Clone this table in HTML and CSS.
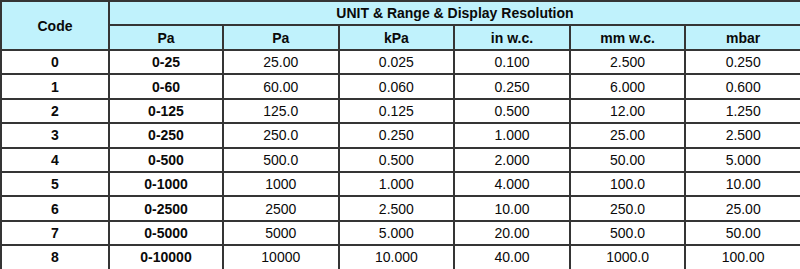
FILE: index.html
```html
<!DOCTYPE html>
<html lang="en">

<head>
    <meta charset="UTF-8">
    <meta name="viewport" content="width=device-width, initial-scale=1.0">
    <title>Unit, Range and Display Resolution</title>
    <link rel="stylesheet" href="styles.css">
</head>

<body>
    <table class="spec-table">
        <colgroup>
            <col class="col-code">
            <col class="col-range">
            <col class="col-unit">
            <col class="col-unit">
            <col class="col-unit">
            <col class="col-unit">
            <col class="col-unit">
        </colgroup>
        <thead>
            <tr class="head-top">
                <th rowspan="2">Code</th>
                <th colspan="6">UNIT &amp; Range &amp; Display Resolution</th>
            </tr>
            <tr class="head-sub">
                <th>Pa</th>
                <th>Pa</th>
                <th>kPa</th>
                <th>in w.c.</th>
                <th>mm w.c.</th>
                <th>mbar</th>
            </tr>
        </thead>
        <tbody>
            <tr><th>0</th><th>0-25</th><td>25.00</td><td>0.025</td><td>0.100</td><td>2.500</td><td>0.250</td></tr>
            <tr><th>1</th><th>0-60</th><td>60.00</td><td>0.060</td><td>0.250</td><td>6.000</td><td>0.600</td></tr>
            <tr><th>2</th><th>0-125</th><td>125.0</td><td>0.125</td><td>0.500</td><td>12.00</td><td>1.250</td></tr>
            <tr><th>3</th><th>0-250</th><td>250.0</td><td>0.250</td><td>1.000</td><td>25.00</td><td>2.500</td></tr>
            <tr><th>4</th><th>0-500</th><td>500.0</td><td>0.500</td><td>2.000</td><td>50.00</td><td>5.000</td></tr>
            <tr><th>5</th><th>0-1000</th><td>1000</td><td>1.000</td><td>4.000</td><td>100.0</td><td>10.00</td></tr>
            <tr><th>6</th><th>0-2500</th><td>2500</td><td>2.500</td><td>10.00</td><td>250.0</td><td>25.00</td></tr>
            <tr><th>7</th><th>0-5000</th><td>5000</td><td>5.000</td><td>20.00</td><td>500.0</td><td>50.00</td></tr>
            <tr><th>8</th><th>0-10000</th><td>10000</td><td>10.000</td><td>40.00</td><td>1000.0</td><td>100.00</td></tr>
        </tbody>
    </table>
</body>

</html>
```

FILE: styles.css
```css
body {
    margin: 0;
    background-color: #ffffff;
    font-family: "Liberation Sans", Arial, sans-serif;
    color: #0a0a0a;
}

.spec-table {
    width: 800px;
    height: 269px;
    border-collapse: collapse;
    table-layout: fixed;
    font-size: 14px;
}

.col-code {
    width: 108px;
}

.col-range {
    width: 114px;
}

.col-unit {
    width: 115.6px;
}

.spec-table th,
.spec-table td {
    border: 2px solid #353535;
    padding: 0;
    text-align: center;
    vertical-align: middle;
    line-height: 16px;
}

.spec-table th {
    font-weight: bold;
}

.spec-table td {
    font-weight: normal;
}

.spec-table thead th {
    background-color: #c0f2fc;
}

.head-top {
    height: 24px;
}

.head-sub {
    height: 25px;
}

.spec-table tbody tr {
    height: 24.4px;
}
```
